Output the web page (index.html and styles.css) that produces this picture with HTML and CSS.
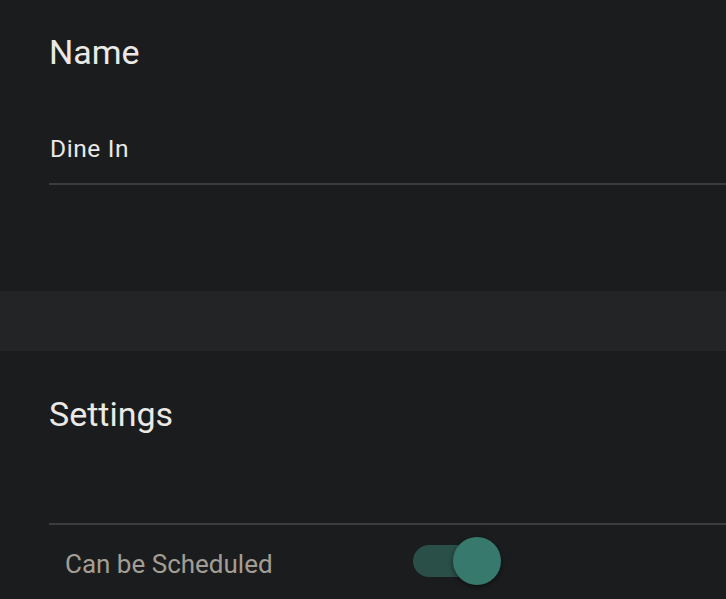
FILE: index.html
```html
<!DOCTYPE html>
<html>
<head>
<meta charset="utf-8">
<link rel="stylesheet" href="styles.css">
</head>
<body>
<section class="section name-section">
  <h2 class="title">Name</h2>
  <div class="field">Dine In</div>
</section>
<div class="band"></div>
<section class="section settings-section">
  <h2 class="title">Settings</h2>
  <div class="divider"></div>
  <div class="row">
    <span class="label">Can be Scheduled</span>
    <span class="switch">
      <span class="track"></span>
      <span class="thumb"></span>
    </span>
  </div>
</section>
</body>
</html>
```

FILE: styles.css
```css
html, body {
  margin: 0;
  padding: 0;
  background: #1b1c1e;
  font-family: Roboto, "Liberation Sans", sans-serif;
  overflow: hidden;
}
.section {
  padding-left: 49px;
}
.name-section {
  padding-top: 31px;
  padding-bottom: 106px;
}
.title {
  margin: 0;
  font-size: 34px;
  line-height: 42px;
  font-weight: 400;
  color: #ebe9e5;
}
.field {
  margin-top: 62px;
  font-size: 24.5px;
  line-height: 28px;
  letter-spacing: 0.6px;
  padding-bottom: 20px;
  padding-left: 1px;
  color: #ebe9e5;
  border-bottom: 2px solid #3b3c3e;
}
.band {
  height: 60px;
  background: #232426;
}
.settings-section {
  padding-top: 42px;
}
.divider {
  margin-top: 88px;
  height: 2px;
  background: #3b3c3e;
}
.row {
  display: flex;
  align-items: center;
  height: 71px;
  padding-left: 15px;
}
.label {
  box-sizing: border-box;
  width: 349px;
  font-size: 26px;
  line-height: 30px;
  padding-top: 6px;
  padding-left: 1px;
  color: #a39e95;
}
.switch {
  position: relative;
  width: 88px;
  height: 48px;
}
.track {
  position: absolute;
  left: 0;
  top: 8px;
  width: 78px;
  height: 32px;
  border-radius: 16px;
  background: #2a4f48;
}
.thumb {
  position: absolute;
  left: 40px;
  top: 0;
  width: 48px;
  height: 48px;
  border-radius: 50%;
  background: #37796d;
  box-shadow: 0 2px 5px rgba(0, 0, 0, 0.45);
}
```
